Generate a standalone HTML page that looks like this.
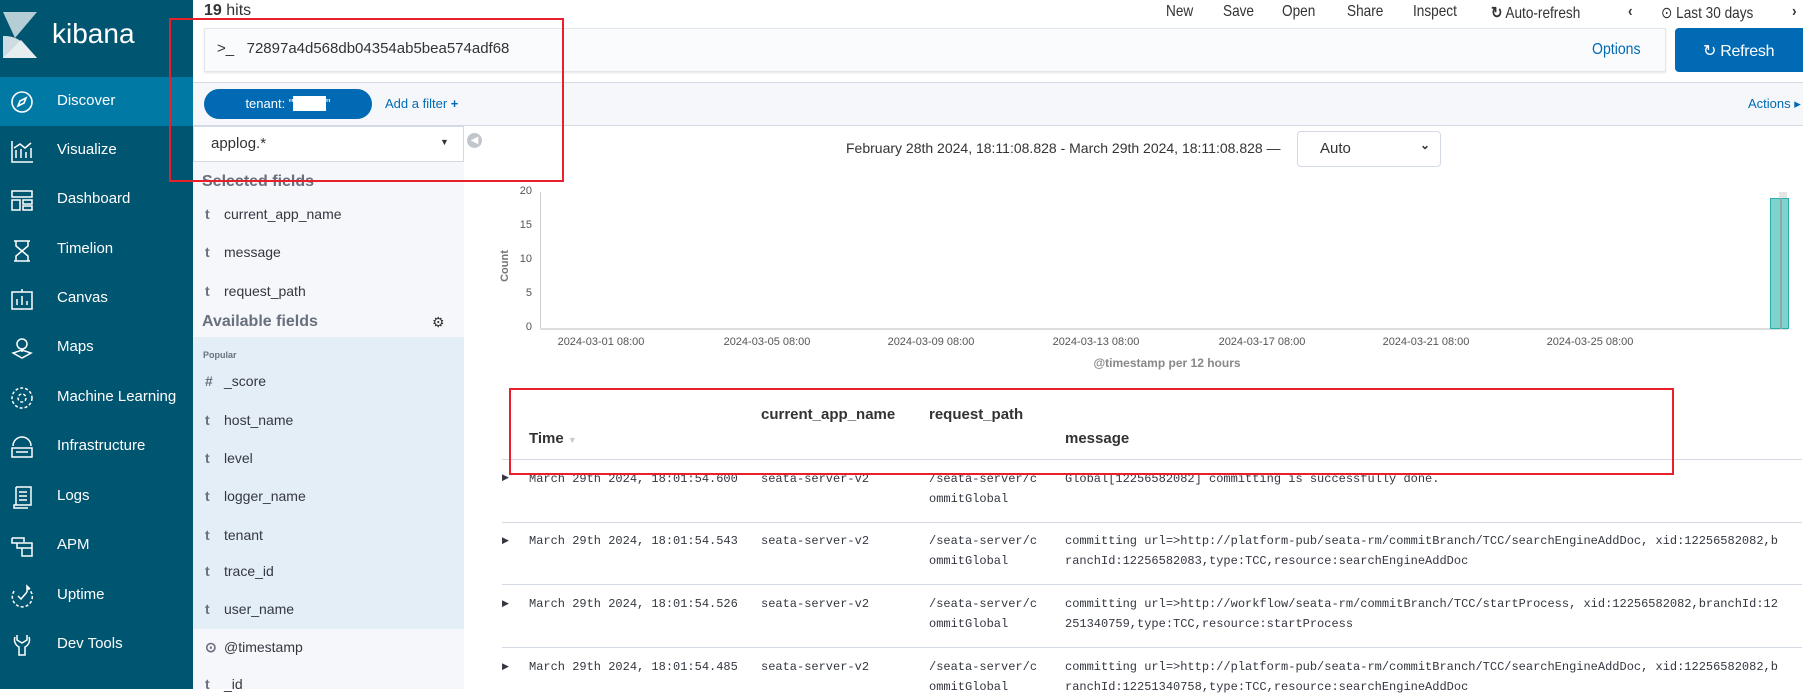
<!DOCTYPE html>
<html><head><meta charset="utf-8"><style>
*{box-sizing:border-box;margin:0;padding:0}
body{width:1803px;height:689px;overflow:hidden;background:#fff;font-family:"Liberation Sans",sans-serif;color:#343741;position:relative}
.abs{position:absolute;white-space:nowrap}
#nav{position:absolute;left:0;top:0;width:193px;height:689px;background:#005571}
.ni{position:absolute;left:0;width:193px;height:49px;color:#fff;font-size:15px}
.ni span{position:absolute;left:57px;top:15px}
.ni svg{position:absolute;left:9px;top:12px}
.act{background:#0079a5}
#fields{position:absolute;left:193px;top:162px;width:271px;height:527px;background:#f5f7fa}
#pop{position:absolute;left:193px;top:337px;width:271px;height:292px;background:#e4eef7}
.f{position:absolute;left:205px;font-size:14px;color:#343741}
.f b{display:inline-block;width:19px;color:#69707d;font-weight:bold}
.top{position:absolute;top:3px;font-size:16px;color:#333;transform:scaleX(.85);transform-origin:left}
.mono{font-family:"Liberation Mono",monospace;font-size:12px;line-height:20px;color:#343741;position:absolute;white-space:nowrap}
.th{position:absolute;font-weight:bold;font-size:15px;color:#333;white-space:nowrap}
.xl{position:absolute;top:336px;font-size:11px;color:#555;transform:translateX(-50%);white-space:nowrap}
.yl{position:absolute;left:518px;font-size:11px;color:#555;width:14px;text-align:right}
.hr{position:absolute;left:502px;width:1300px;height:1px;background:#d3dae6}
.red{position:absolute;border:2px solid #e8202a}
</style></head><body>
<div id="nav">
 <svg class="abs" style="left:3px;top:12px" width="34" height="46" viewBox="0 0 34 46"><polygon points="0,0 34,0 12,26" fill="#b5cdd5"/><path d="M0,24 A28,28 0 0 1 24,35 L34,46 L0,46Z" fill="#cfdde2"/><polygon points="0,46 18,28 34,46" fill="#e6eef0"/></svg>
 <div class="abs" style="left:52px;top:18px;font-size:28px;color:#fff">kibana</div>
</div>
<div class="ni act" style="top:77px"><svg width="26" height="26" viewBox="0 0 26 26" fill="none" stroke="#fff" stroke-width="1.6"><circle cx="13" cy="13" r="10"/><path d="M17 9l-6 3-2 5 6-3z"/></svg><span>Discover</span></div>
<div class="ni" style="top:126px"><svg width="26" height="26" viewBox="0 0 26 26" fill="none" stroke="#fff" stroke-width="1.5"><path d="M3 3v21h21M7 20v-8M12 20v-9M17 20v-6M22 20v-10M5 10l6-4 5 4 6-5"/></svg><span>Visualize</span></div>
<div class="ni" style="top:175px"><svg width="26" height="26" viewBox="0 0 26 26" fill="none" stroke="#fff" stroke-width="1.5"><rect x="3" y="4" width="20" height="6"/><rect x="3" y="13" width="8" height="10"/><rect x="14" y="13" width="9" height="4"/><rect x="14" y="19" width="9" height="4"/></svg><span>Dashboard</span></div>
<div class="ni" style="top:225px"><svg width="26" height="26" viewBox="0 0 26 26" fill="none" stroke="#fff" stroke-width="1.5"><path d="M5 4h16M5 24h16M7 4v5l6 5 6-5V4M7 24v-5l6-5 6 5v5"/></svg><span>Timelion</span></div>
<div class="ni" style="top:274px"><svg width="26" height="26" viewBox="0 0 26 26" fill="none" stroke="#fff" stroke-width="1.5"><rect x="3" y="6" width="20" height="17"/><path d="M8 19v-6M13 19v-9M18 19v-4M13 3v3"/></svg><span>Canvas</span></div>
<div class="ni" style="top:323px"><svg width="26" height="26" viewBox="0 0 26 26" fill="none" stroke="#fff" stroke-width="1.5"><circle cx="13" cy="9" r="5"/><path d="M13 14v3M4 18l9 5 9-5-9-3z"/></svg><span>Maps</span></div>
<div class="ni" style="top:373px"><svg width="26" height="26" viewBox="0 0 26 26" fill="none" stroke="#fff" stroke-width="1.5" stroke-dasharray="3 2"><circle cx="13" cy="13" r="10"/><circle cx="13" cy="13" r="4"/></svg><span>Machine Learning</span></div>
<div class="ni" style="top:422px"><svg width="26" height="26" viewBox="0 0 26 26" fill="none" stroke="#fff" stroke-width="1.5"><path d="M4 12a9 9 0 0 1 18 0M3 14h20v9H3zM7 18h12"/></svg><span>Infrastructure</span></div>
<div class="ni" style="top:472px"><svg width="26" height="26" viewBox="0 0 26 26" fill="none" stroke="#fff" stroke-width="1.5"><path d="M7 3h15v18H5v3h14M7 3v18M10 8h8M10 12h8M10 16h8"/></svg><span>Logs</span></div>
<div class="ni" style="top:521px"><svg width="26" height="26" viewBox="0 0 26 26" fill="none" stroke="#fff" stroke-width="1.5"><path d="M3 5h12v4M3 5v5h5v5h15v-5H8M13 15v8h10v-8"/></svg><span>APM</span></div>
<div class="ni" style="top:571px"><svg width="26" height="26" viewBox="0 0 26 26" fill="none" stroke="#fff" stroke-width="1.5"><path d="M18 5a10 10 0 1 1-12 2" stroke-dasharray="3 2"/><path d="M9 13l3 3 6-7M18 9V3l3 3"/></svg><span>Uptime</span></div>
<div class="ni" style="top:620px"><svg width="26" height="26" viewBox="0 0 26 26" fill="none" stroke="#fff" stroke-width="1.5"><path d="M8 3v5l5 3 5-3V3M6 5a8 8 0 0 0 4 10v8h6v-8a8 8 0 0 0 4-10"/></svg><span>Dev Tools</span></div>

<div class="abs" style="left:204px;top:2px;font-size:16px;color:#333"><b>19</b> hits</div>
<div class="top" style="left:1166px">New</div>
<div class="top" style="left:1223px">Save</div>
<div class="top" style="left:1282px">Open</div>
<div class="top" style="left:1347px">Share</div>
<div class="top" style="left:1413px">Inspect</div>
<div class="top" style="left:1491px"><b>↻</b> Auto-refresh</div>
<div class="top" style="left:1628px;font-weight:bold">‹</div>
<div class="top" style="left:1661px">⊙ Last 30 days</div>
<div class="top" style="left:1792px;font-weight:bold">›</div>

<div class="abs" style="left:204px;top:28px;width:1462px;height:44px;border:1px solid #e2e6ed;background:#fafbfd;box-shadow:0 1px 2px rgba(0,0,0,.1)"></div>
<div class="abs" style="left:217px;top:40px;font-size:15px;color:#333">&gt;_&nbsp;&nbsp; 72897a4d568db04354ab5bea574adf68</div>
<div class="abs" style="left:1592px;top:41px;font-size:16px;color:#006bb4;transform:scaleX(.88);transform-origin:left">Options</div>
<div class="abs" style="left:1675px;top:28px;width:128px;height:44px;background:#006bb4;border-radius:4px 0 0 4px;color:#fff;font-size:16px;padding:13px 0 0 28px;letter-spacing:-.3px">↻ Refresh</div>

<div class="abs" style="left:193px;top:82px;width:1610px;height:44px;background:#f5f7fa;border-top:1px solid #d3dae6;border-bottom:1px solid #d3dae6"></div>
<div class="abs" style="left:204px;top:89px;width:168px;height:30px;border-radius:15px;background:#006bb4;color:#fff;font-size:13px;text-align:center;padding-top:7px">tenant: "<span style="background:#fff;color:#fff">xxxxx</span>"</div>
<div class="abs" style="left:385px;top:96px;font-size:13px;color:#006bb4">Add a filter <b>+</b></div>
<div class="abs" style="left:1748px;top:96px;font-size:13px;color:#006bb4">Actions ▸</div>

<div id="fields"></div><div id="pop"></div>
<div class="abs" style="left:193px;top:126px;width:271px;height:36px;background:#fff;border:1px solid #d3dae6"></div>
<div class="abs" style="left:211px;top:135px;font-size:15px;color:#333">applog.*</div>
<div class="abs" style="left:440px;top:137px;font-size:9px;color:#333">▼</div>
<div class="abs" style="left:467px;top:133px;width:15px;height:15px;border-radius:50%;background:#c1c6cc;color:#fff;font-size:10px;text-align:center;line-height:15px">◀</div>
<div class="abs" style="left:202px;top:173px;font-size:16px;font-weight:bold;color:#69707d">Selected fields</div>
<div class="f" style="top:206px"><b>t</b>current_app_name</div>
<div class="f" style="top:244px"><b>t</b>message</div>
<div class="f" style="top:283px"><b>t</b>request_path</div>
<div class="abs" style="left:202px;top:313px;font-size:16px;font-weight:bold;color:#69707d">Available fields</div>
<div class="abs" style="left:432px;top:314px;font-size:14px;color:#333">⚙</div>
<div class="abs" style="left:203px;top:350px;font-size:9px;font-weight:bold;color:#69707d">Popular</div>
<div class="f" style="top:373px"><b>#</b>_score</div>
<div class="f" style="top:412px"><b>t</b>host_name</div>
<div class="f" style="top:450px"><b>t</b>level</div>
<div class="f" style="top:488px"><b>t</b>logger_name</div>
<div class="f" style="top:527px"><b>t</b>tenant</div>
<div class="f" style="top:563px"><b>t</b>trace_id</div>
<div class="f" style="top:601px"><b>t</b>user_name</div>
<div class="f" style="top:639px"><b>⊙</b>@timestamp</div>
<div class="f" style="top:676px"><b>t</b>_id</div>

<div class="abs" style="left:846px;top:140px;font-size:14px;color:#333">February 28th 2024, 18:11:08.828 - March 29th 2024, 18:11:08.828 —</div>
<div class="abs" style="left:1297px;top:131px;width:144px;height:36px;border:1px solid #d3dae6;border-radius:4px;font-size:15px;color:#333;padding:8px 0 0 22px">Auto<span style="position:absolute;right:10px;top:6px;font-size:12px;font-weight:bold">⌄</span></div>
<div class="yl" style="top:185px">20</div>
<div class="yl" style="top:219px">15</div>
<div class="yl" style="top:253px">10</div>
<div class="yl" style="top:287px">5</div>
<div class="yl" style="top:321px">0</div>
<div class="abs" style="left:489px;top:260px;font-size:11px;font-weight:bold;color:#777;transform:rotate(-90deg)">Count</div>
<div class="abs" style="left:540px;top:192px;width:1px;height:137px;background:#ccc"></div>
<div class="abs" style="left:540px;top:328px;width:1248px;height:2px;background:#ddd"></div>
<div class="abs" style="left:1779px;top:192px;width:8px;height:137px;background:#e4e4e4"></div>
<div class="abs" style="left:1770px;top:198px;width:19px;height:131px;background:#80d2cf;border:1px solid #26b0a8"></div>
<div class="abs" style="left:1780px;top:198px;width:2px;height:131px;background:#8aa"></div>
<div class="xl" style="left:601px">2024-03-01 08:00</div>
<div class="xl" style="left:767px">2024-03-05 08:00</div>
<div class="xl" style="left:931px">2024-03-09 08:00</div>
<div class="xl" style="left:1096px">2024-03-13 08:00</div>
<div class="xl" style="left:1262px">2024-03-17 08:00</div>
<div class="xl" style="left:1426px">2024-03-21 08:00</div>
<div class="xl" style="left:1590px">2024-03-25 08:00</div>
<div class="xl" style="left:1167px;top:356px;font-weight:bold;color:#888;font-size:12px">@timestamp per 12 hours</div>

<div class="th" style="left:529px;top:430px">Time <span style="color:#c8ccd2;font-size:9px">▼</span></div>
<div class="th" style="left:761px;top:406px">current_app_name</div>
<div class="th" style="left:929px;top:406px">request_path</div>
<div class="th" style="left:1065px;top:430px">message</div>
<div class="hr" style="top:459px"></div>
<div class="hr" style="top:522px"></div>
<div class="hr" style="top:584px"></div>
<div class="hr" style="top:647px"></div>

<div class="mono" style="left:502px;top:468px;font-size:9px">▶</div>
<div class="mono" style="left:529px;top:469px">March 29th 2024, 18:01:54.600</div>
<div class="mono" style="left:761px;top:469px">seata-server-v2</div>
<div class="mono" style="left:929px;top:469px">/seata-server/c<br>ommitGlobal</div>
<div class="mono" style="left:1065px;top:469px">Global[12256582082] committing is successfully done.</div>

<div class="mono" style="left:502px;top:531px;font-size:9px">▶</div>
<div class="mono" style="left:529px;top:531px">March 29th 2024, 18:01:54.543</div>
<div class="mono" style="left:761px;top:531px">seata-server-v2</div>
<div class="mono" style="left:929px;top:531px">/seata-server/c<br>ommitGlobal</div>
<div class="mono" style="left:1065px;top:531px">committing url=&gt;http://platform-pub/seata-rm/commitBranch/TCC/searchEngineAddDoc, xid:12256582082,b<br>ranchId:12256582083,type:TCC,resource:searchEngineAddDoc</div>

<div class="mono" style="left:502px;top:594px;font-size:9px">▶</div>
<div class="mono" style="left:529px;top:594px">March 29th 2024, 18:01:54.526</div>
<div class="mono" style="left:761px;top:594px">seata-server-v2</div>
<div class="mono" style="left:929px;top:594px">/seata-server/c<br>ommitGlobal</div>
<div class="mono" style="left:1065px;top:594px">committing url=&gt;http://workflow/seata-rm/commitBranch/TCC/startProcess, xid:12256582082,branchId:12<br>251340759,type:TCC,resource:startProcess</div>

<div class="mono" style="left:502px;top:657px;font-size:9px">▶</div>
<div class="mono" style="left:529px;top:657px">March 29th 2024, 18:01:54.485</div>
<div class="mono" style="left:761px;top:657px">seata-server-v2</div>
<div class="mono" style="left:929px;top:657px">/seata-server/c<br>ommitGlobal</div>
<div class="mono" style="left:1065px;top:657px">committing url=&gt;http://platform-pub/seata-rm/commitBranch/TCC/searchEngineAddDoc, xid:12256582082,b<br>ranchId:12251340758,type:TCC,resource:searchEngineAddDoc</div>

<div class="red" style="left:169px;top:18px;width:395px;height:164px"></div>
<div class="red" style="left:509px;top:388px;width:1165px;height:87px"></div>
</body></html>
